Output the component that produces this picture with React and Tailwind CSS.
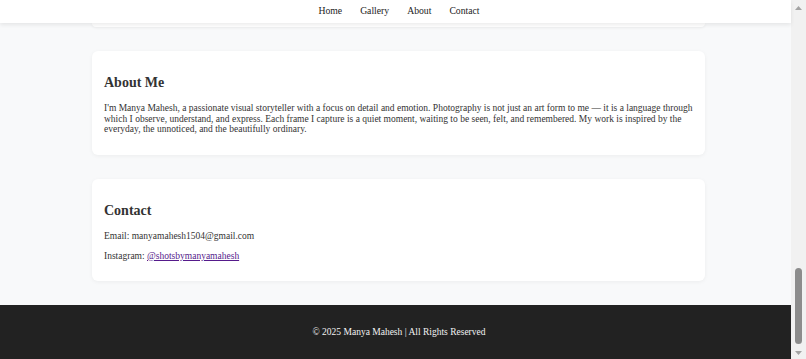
import React from "react";

const serif = "font-['Liberation_Serif','Times_New_Roman',serif]";

function Scrollbar() {
  return (
    <div className="flex h-full w-[15px] flex-col items-center bg-[#f1f1f1]">
      <div className="flex h-[15px] w-full items-center justify-center">
        <svg width="7" height="4" viewBox="0 0 7 4"><path d="M0 4 L3.5 0 L7 4 Z" fill="#a3a3a3" /></svg>
      </div>
      <div className="flex-1 w-full px-[4px] pt-[253px] pb-[2px]">
        <div className="h-full w-full rounded-full bg-[#8c8c8c]" />
      </div>
      <div className="flex h-[13px] w-full items-center justify-center">
        <svg width="7" height="4" viewBox="0 0 7 4"><path d="M0 0 L3.5 4 L7 0 Z" fill="#a3a3a3" /></svg>
      </div>
    </div>
  );
}

export default function App() {
  return (
    <div className={`flex h-[359px] w-[806px] overflow-hidden bg-[#f8f9fa] text-[#333] ${serif}`}>
      <div className="flex w-[791px] flex-col">
        <nav className="relative z-10 flex h-[23px] shrink-0 items-center justify-center gap-[18px] bg-white pl-[7px] text-[9.7px] text-[#222] shadow-[0_2px_4px_rgba(0,0,0,0.08)]">
          <span>Home</span>
          <span>Gallery</span>
          <span>About</span>
          <span>Contact</span>
        </nav>
        <div className="ml-[92px] h-[4px] w-[613px] rounded-b-[6px] bg-white shadow-[0_1px_3px_rgba(0,0,0,0.06)]" />
        <section className="ml-[92px] mt-[24px] h-[104px] w-[613px] rounded-[6px] bg-white px-[12px] pt-[23px] shadow-[0_1px_4px_rgba(0,0,0,0.05)]">
          <h2 className="text-[14px] font-bold leading-[17px]">About Me</h2>
          <p className="mt-[12px] text-[9.5px] leading-[10.5px]">
            I'm Manya Mahesh, a passionate visual storyteller with a focus on detail and emotion. Photography is not just an art form to me — it is a language through which I observe, understand, and express. Each frame I capture is a quiet moment, waiting to be seen, felt, and remembered. My work is inspired by the everyday, the unnoticed, and the beautifully ordinary.
          </p>
        </section>
        <section className="ml-[92px] mt-[24px] h-[102px] w-[613px] rounded-[6px] bg-white px-[12px] pt-[23px] shadow-[0_1px_4px_rgba(0,0,0,0.05)]">
          <h2 className="text-[14px] font-bold leading-[17px]">Contact</h2>
          <p className="mt-[12px] text-[9.5px] leading-[11px]">Email: manyamahesh1504@gmail.com</p>
          <p className="mt-[9px] text-[9.5px] leading-[11px]">
            Instagram: <a className="text-[#551a8b] underline">@shotsbymanyamahesh</a>
          </p>
        </section>
        <footer className="mt-auto flex h-[54px] shrink-0 items-center justify-center bg-[#222] pl-[7px] text-[9.5px] text-[#f2f2f2]">
          © 2025 Manya Mahesh | All Rights Reserved
        </footer>
      </div>
      <Scrollbar />
    </div>
  );
}
